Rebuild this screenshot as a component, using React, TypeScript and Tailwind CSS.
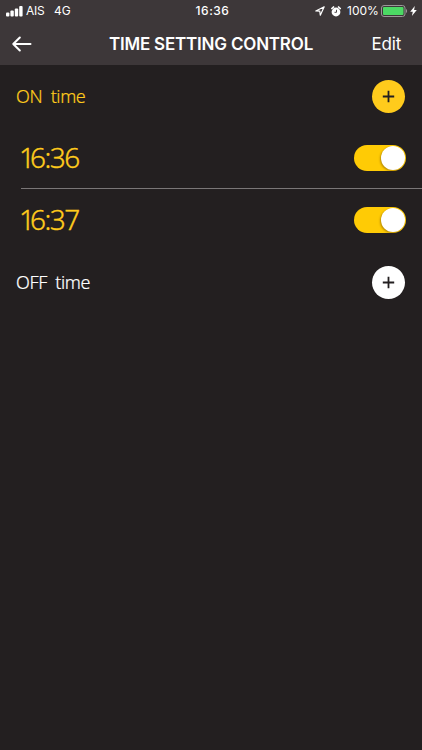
import React from "react";

function AddButton({ className }: { className: string }) {
  return (
    <button aria-label="Add time" className={`flex size-[33px] items-center justify-center rounded-full ${className}`}>
      <svg width="13" height="13" viewBox="0 0 13 13" stroke="#231f20" strokeWidth="1.8">
        <path d="M6.5 .8v11.400M.8 6.500h11.400" />
      </svg>
    </button>
  );
}

function Toggle() {
  return (
    <button role="switch" aria-checked="true" aria-label="Enabled" className="flex h-[26px] w-[51.500px] items-center justify-end rounded-full bg-[#ffcb05] pr-px">
      <span className="size-6 rounded-full bg-white shadow-[-1px_1px_2px_rgba(80,50,0,0.4)]" />
    </button>
  );
}

function TimeRow({ time }: { time: string }) {
  return (
    <div className="flex h-[61px] items-center justify-between pr-[16.500px] pl-[19px]">
      <span className="-mt-0.5 font-['Noto_Sans',sans-serif] text-[28px] leading-none font-light tracking-[-1.500px] text-[#ffcb1c] [-webkit-text-stroke:0.350px_#ffcb1c] first-letter:tracking-[-5px]">
        <span className="tracking-[-4.500px]">{time.slice(0, 1)}</span>
        {time.slice(1)}
      </span>
      <Toggle />
    </div>
  );
}

function SectionHeader({ label, textClass, buttonClass }: { label: string; textClass: string; buttonClass: string }) {
  return (
    <div className="flex h-[62px] items-center justify-between pr-[17px] pl-4">
      <h2 className={`font-['Noto_Sans',sans-serif] text-[18px] leading-none font-light tracking-[-0.400px] [word-spacing:4.200px] [-webkit-text-stroke:0.200px_currentColor] ${textClass}`}>{label}</h2>
      <AddButton className={buttonClass} />
    </div>
  );
}

function StatusBar() {
  return (
    <div className="grid h-[22px] grid-cols-3 items-center text-[12px] leading-none">
      <div className="flex items-center pl-[6px]">
        <svg width="17" height="11" viewBox="0 0 17 11" fill="white">
          <rect x="0" y="6.500" width="3.400" height="4" rx="1" />
          <rect x="4.400" y="4.500" width="3.400" height="6" rx="1" />
          <rect x="8.800" y="2.500" width="3.400" height="8" rx="1" />
          <rect x="13.200" y="0" width="3.400" height="10.500" rx="1" />
        </svg>
        <span className="ml-[3px] w-7 tracking-[-0.300px]">AIS</span>
        <span className="tracking-[-0.100px]">4G</span>
      </div>
      <div className="pl-[3px] text-center font-medium tracking-[0.500px]">16:36</div>
      <div className="flex items-center justify-end pr-[5px]">
        <svg width="10" height="10" viewBox="0 0 10 10" fill="none" stroke="white" strokeWidth="1.2" strokeLinejoin="round">
          <path d="M.8 5 9.200.8 5.300 9.200 4.800 5.200Z" />
        </svg>
        <svg className="ml-[6px]" width="11" height="11" viewBox="0 0 11 11">
          <circle cx="5" cy="6" r="4.400" fill="white" />
          <path d="M.9 2.500 2.500 1M9.200 2.500 7.600 1" stroke="white" strokeWidth="1.700" strokeLinecap="round" />
          <path d="M5.500 3.800v2.500h-2" fill="none" stroke="#3d3739" strokeWidth=".9" />
        </svg>
        <span className="ml-[5px] w-[31px] tracking-[0]">100%</span>
        <svg className="ml-[3px]" width="27" height="12" viewBox="0 0 27 12">
          <rect x=".5" y=".5" width="23.500" height="11" rx="2.500" fill="none" stroke="#9b9798" />
          <rect x="2" y="2" width="20.500" height="8" rx="1" fill="#4cd964" />
          <path d="M25 4c1.500.6 1.500 3.400 0 4Z" fill="#9b9798" />
        </svg>
        <svg className="ml-[2px]" width="7" height="10" viewBox="0 0 7 10" fill="white">
          <path d="M4.800 0 .2 5.700h2.600L1.900 10 6.800 4H4.100Z" />
        </svg>
      </div>
    </div>
  );
}

export default function App() {
  return (
    <div className="h-[750px] w-[422px] overflow-hidden bg-[#231f20] font-['Inter',sans-serif] text-white">
      <header className="h-[65px] bg-[#3d3739]">
        <StatusBar />
        <nav className="grid h-[43px] grid-cols-[80px_1fr_80px] items-center pt-px">
          <button aria-label="Back" className="pl-3">
            <svg width="20" height="16" viewBox="0 0 20 16" fill="none" stroke="white" strokeWidth="2" strokeLinecap="round" strokeLinejoin="round">
              <path d="M18.500 8H1.500M7.800 1.500 1.300 8l6.500 6.500" />
            </svg>
          </button>
          <h1 className="text-center text-[17px] leading-none font-semibold tracking-[-0.200px] whitespace-nowrap">TIME SETTING CONTROL</h1>
          <button className="pr-[21px] text-right text-[17px] leading-none tracking-[-0.200px]">Edit</button>
        </nav>
      </header>
      <main>
        <SectionHeader label="ON time" textClass="text-[#ffcb1c]" buttonClass="bg-[#ffcb1c]" />
        <TimeRow time="16:36" />
        <div className="ml-[21px] h-px bg-[#7a7677]" />
        <TimeRow time="16:37" />
        <div className="pt-px">
          <SectionHeader label="OFF time" textClass="text-white" buttonClass="bg-white" />
        </div>
      </main>
    </div>
  );
}
